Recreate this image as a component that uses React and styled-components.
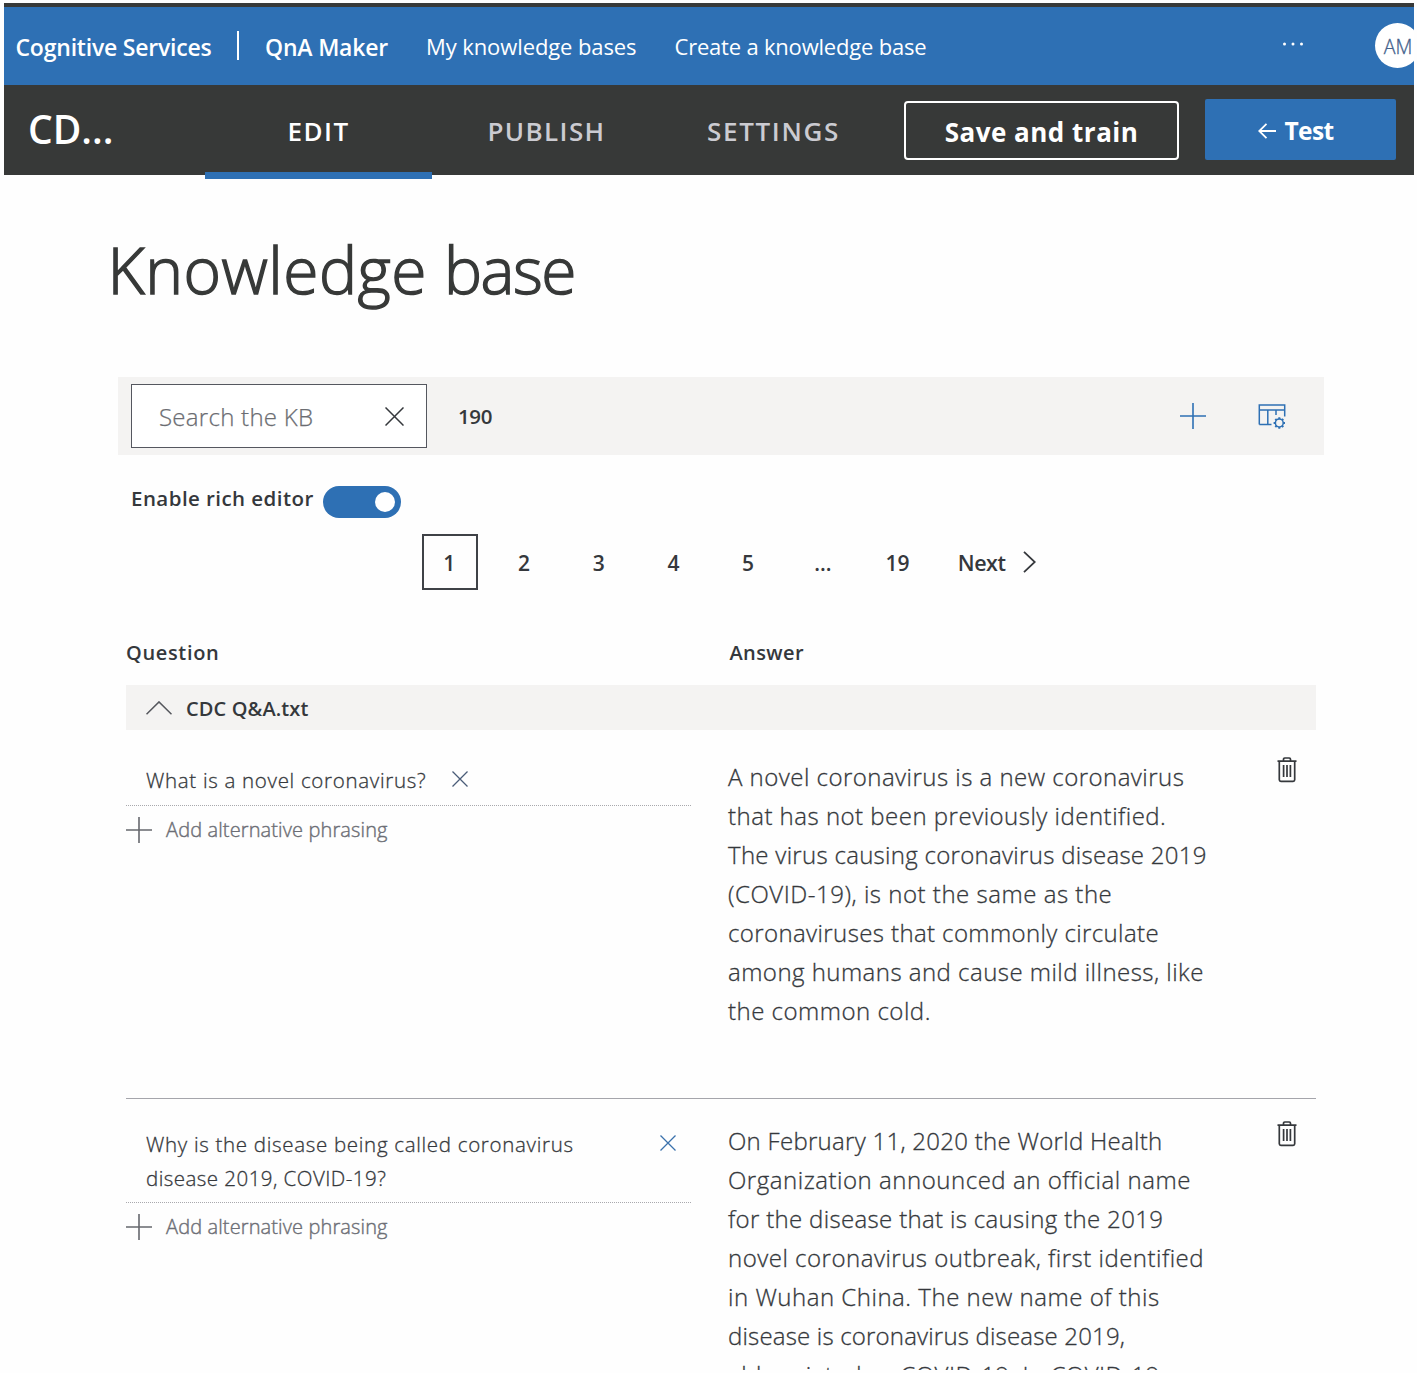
import React from 'react';
import styled, { createGlobalStyle } from 'styled-components';

const blue = '#2e70b4';
const dark = '#373938';
const ink = '#35383c';
const panel = '#f4f3f2';

const GlobalStyle = createGlobalStyle`
  * { box-sizing: border-box; }
  body {
    margin: 0;
    background: #fefefe;
    color: ${ink};
    font-family: "Open Sans", "Noto Sans", sans-serif;
  }
`;

const Text = styled.span`
  display: block;
  white-space: nowrap;
  letter-spacing: ${(p) => p.$ls || 0}px;
`;

const Screen = styled.div`
  height: 1370px;
  padding: 3px 3px 0 4px;
  overflow: hidden;
`;

const Header = styled.header`
  height: 172px;
  border-top: 4px solid ${dark};
  background: ${dark};
`;

const ServiceBar = styled.nav`
  display: flex;
  align-items: center;
  height: 77.5px;
  padding-left: 11.5px;
  background: ${blue};
  color: #fff;
  overflow: hidden;
`;

const Brand = styled(Text)`
  font-size: 23px;
  font-weight: 600;
  line-height: 32px;
  padding-top: 2px;
`;

const Divider = styled.i`
  width: 2px;
  height: 29px;
  margin: 0 26px 0 25.5px;
  background: #fff;
`;

const ServiceLink = styled(Text)`
  margin-left: 38px;
  font-size: 22px;
  line-height: 32px;
  padding-top: 1px;
`;

const More = styled.svg`
  width: 22px;
  height: 6px;
  margin: 0 71.5px 3px auto;
  fill: #fff;
`;

const Avatar = styled.div`
  flex: none;
  display: grid;
  place-items: center;
  width: 45px;
  height: 45px;
  margin-right: -6px;
  padding: 1px 0 0 1px;
  border-radius: 50%;
  background: #fff;
  color: #44628c;
  font-size: 19.5px;
  font-weight: 300;
  -webkit-text-stroke: 0.3px;
`;

const KbBar = styled.div`
  display: flex;
  align-items: center;
  height: 91px;
  padding-left: 24px;
  color: #fff;
`;

const KbName = styled(Text)`
  width: 177px;
  font-size: 39px;
  font-weight: 600;
  line-height: 54px;
  padding-bottom: 3px;
`;

const Tab = styled(Text)`
  position: relative;
  width: 227px;
  height: 91px;
  padding-left: ${(p) => (p.$active ? 0 : 2)}px;
  color: ${(p) => (p.$active ? '#fff' : '#cbcbd1')};
  font-size: 26px;
  font-weight: 600;
  line-height: 92px;
  text-align: center;

  &::after {
    content: '';
    display: ${(p) => (p.$active ? 'block' : 'none')};
    position: absolute;
    left: 0;
    right: 0;
    bottom: -3px;
    height: 7px;
    background: ${blue};
  }
`;

const BarButton = styled.button`
  display: flex;
  align-items: center;
  justify-content: center;
  padding: 0;
  border: 0;
  border-radius: 2px;
  color: #fff;
  font-family: inherit;
  font-weight: 700;
`;

const SaveButton = styled(BarButton)`
  width: 275px;
  height: 59px;
  margin: 0 0 0 18px;
  padding-top: 3px;
  border: 2px solid #fff;
  border-radius: 4px;
  background: transparent;
  font-size: 26px;
`;

const TestButton = styled(BarButton)`
  gap: 8px;
  width: 191px;
  height: 61px;
  margin: 0 0 2px 26px;
  padding: 3px 9px 0 0;
  background: ${blue};
  font-size: 24.5px;
`;

const Main = styled.main`
  padding: 55px 90px 0 114px;
`;

const Title = styled.h1`
  display: flex;
  gap: 17px;
  margin: 0 0 67px -10.5px;
  color: ${dark};
  font-size: 64px;
  font-weight: 300;
  line-height: 80px;
  -webkit-text-stroke: 1.4px;
`;

const Toolbar = styled.div`
  display: flex;
  align-items: center;
  height: 78px;
  padding: 0 38px 0 13px;
  background: ${panel};
`;

const SearchBox = styled.div`
  display: flex;
  align-items: center;
  justify-content: space-between;
  width: 295.5px;
  height: 64px;
  padding: 0 21.5px 0 27px;
  border: 1.5px solid #55575f;
  background: #fff;
`;

const Placeholder = styled(Text)`
  padding-top: 1px;
  color: #6b6d72;
  font-size: 24px;
  font-weight: 300;
  -webkit-text-stroke: 0.25px;
`;

const Count = styled(Text)`
  margin: 0 auto 0 31.5px;
  font-size: 20.5px;
  font-weight: 600;
`;

const Icon = styled.svg`
  flex: none;
  display: block;
  width: ${(p) => p.$w}px;
  height: ${(p) => p.$h}px;
  fill: none;
  stroke: ${(p) => p.$color || ink};
  stroke-width: ${(p) => p.$sw || 1.5};
`;

const ToolbarActions = styled.div`
  display: flex;
  align-items: center;
  gap: 52px;
`;

const EditorToggle = styled.div`
  display: flex;
  height: 79px;
  padding: 30px 0 0 13px;
`;

const ToggleLabel = styled(Text)`
  width: 192px;
  font-size: 20.5px;
  font-weight: 600;
  line-height: 27px;
`;

const Switch = styled.div`
  display: flex;
  justify-content: flex-end;
  width: 77.5px;
  height: 32px;
  margin-top: 1px;
  padding: 6px;
  border-radius: 16px;
  background: ${blue};
`;

const Knob = styled.i`
  width: 20px;
  height: 20px;
  border-radius: 50%;
  background: #fff;
`;

const Pagination = styled.div`
  display: flex;
  align-items: center;
  gap: 19px;
  height: 56px;
  margin-left: 304px;
`;

const Page = styled(Text)`
  flex: none;
  width: 55.7px;
  height: 56px;
  padding-right: 1px;
  border: 2px solid ${(p) => (p.$active ? '#3f4247' : 'transparent')};
  font-size: 21px;
  font-weight: 600;
  line-height: 55px;
  text-align: center;
`;

const Next = styled.div`
  display: flex;
  align-items: center;
  gap: 18px;
  margin-left: 13px;
  font-size: 21.5px;
  font-weight: 600;
`;

const Table = styled.section`
  width: 1190px;
  margin: 46px 0 0 8px;
`;

const TableHead = styled.div`
  display: grid;
  grid-template-columns: 603.5px 1fr;
  height: 49px;
  font-size: 20px;
  font-weight: 600;
  line-height: 34px;
`;

const GroupRow = styled.div`
  display: flex;
  align-items: center;
  gap: 14px;
  height: 45px;
  padding-left: 20px;
  background: ${panel};
  font-size: 20px;
  font-weight: 600;

  span { padding-top: 2px; }
`;

const QnaRow = styled.div`
  display: grid;
  grid-template-columns: 566px 585px 1fr;
  height: ${(p) => p.$h}px;
  padding-top: ${(p) => p.$top}px;
  border-bottom: 1px solid #a5a5ab;
`;

const QuestionCell = styled.div`
  padding-right: 1px;
  color: ${ink};
`;

const Question = styled.div`
  display: flex;
  align-items: flex-start;
  gap: ${(p) => p.$gap}px;
  height: ${(p) => p.$h}px;
  padding: 6px 0 0 20px;
  border-bottom: 1px dotted #a9a9ad;
  font-size: 20.5px;
  font-weight: 300;
  line-height: 34px;
  -webkit-text-stroke: 0.3px;

  svg { margin-top: 8px; }
`;

const AddPhrasing = styled.div`
  display: flex;
  align-items: center;
  gap: 14px;
  height: 47px;
  color: #6c6e75;
  font-size: 20px;
  font-weight: 300;
  -webkit-text-stroke: 0.4px;
`;

const Answer = styled.div`
  padding-left: 36px;
  font-size: 24px;
  font-weight: 300;
  line-height: 39px;
  -webkit-text-stroke: 0.3px;
`;

function Cross({ size, sw, color }) {
  return (
    <Icon $w={size} $h={size} $sw={sw} $color={color} viewBox={`0 0 ${size} ${size}`}>
      <path d={`M.5 .5L${size - 0.5} ${size - 0.5}M${size - 0.5} .5L.5 ${size - 0.5}`} />
    </Icon>
  );
}

function Plus({ color }) {
  return (
    <Icon $w={26} $h={26} $color={color} $sw={1.6} viewBox="0 0 26 26">
      <path d="M13 0V26M0 13H26" />
    </Icon>
  );
}

function ColumnSettings() {
  return (
    <Icon $w={28} $h={26} $color={blue} viewBox="0 0 28 26">
      <path d="M1.3 21.5V2H26.7V13.5M1.3 7H26.7M9.8 7V21.5M18 7V12M1.3 21.5H13.5" />
      <circle cx="21.3" cy="20" r="3.9" />
      <path
        d="M21.3 14.3V16.1M21.3 23.9V25.7M15.6 20H17.4M25.2 20H27M17.3 16L18.6 17.3M24 22.7L25.3 24M17.3 24L18.6 22.7M24 17.3L25.3 16"
        strokeWidth="2"
      />
    </Icon>
  );
}

function Trash() {
  return (
    <Icon $w={20} $h={26} $sw={1.7} viewBox="0 0 20 26">
      <path d="M.5 4.2H19.5M6.5 4V2.3Q6.5 1 7.8 1H12.2Q13.5 1 13.5 2.3V4M2.3 4.2V22.7Q2.3 24.3 3.9 24.3H16.1Q17.7 24.3 17.7 22.7V4.2M6.6 8V20M10 8V20M13.4 8V20" />
    </Icon>
  );
}

const rows = [
  {
    h: 368.5,
    top: 27,
    gap: 26,
    questionHeight: 49,
    cross: '#4a5c78',
    question: [['What is a novel coronavirus?', 0.69]],
    answer: [
      ['A novel coronavirus is a new coronavirus', 0.47],
      ['that has not been previously identified.', 0.49],
      ['The virus causing coronavirus disease 2019', 0.29],
      ['(COVID-19), is not the same as the', 0.52],
      ['coronaviruses that commonly circulate', 0.39],
      ['among humans and cause mild illness, like', 0.47],
      ['the common cold.', 0.5],
    ],
  },
  {
    h: 368,
    top: 22.5,
    gap: 86,
    questionHeight: 82,
    cross: '#3a71ac',
    question: [
      ['Why is the disease being called coronavirus', 0.69],
      ['disease 2019, COVID-19?', 0.46],
    ],
    answer: [
      ['On February 11, 2020 the World Health', 0.28],
      ['Organization announced an official name', 0.53],
      ['for the disease that is causing the 2019', 0.33],
      ['novel coronavirus outbreak, first identified', 0.5],
      ['in Wuhan China. The new name of this', 0.52],
      ['disease is coronavirus disease 2019,', 0.18],
      ['abbreviated as COVID-19. In COVID-19,', 0.5],
    ],
  },
];

export default function App() {
  return (
    <Screen>
      <GlobalStyle />
      <Header>
        <ServiceBar>
          <Brand $ls={-0.21}>Cognitive Services</Brand>
          <Divider />
          <Brand $ls={-0.2}>QnA Maker</Brand>
          <ServiceLink $ls={-0.1}>My knowledge bases</ServiceLink>
          <ServiceLink $ls={-0.2}>Create a knowledge base</ServiceLink>
          <More viewBox="0 0 22 6">
            <circle cx="2.5" cy="3" r="1.5" />
            <circle cx="11" cy="3" r="1.5" />
            <circle cx="19.5" cy="3" r="1.5" />
          </More>
          <Avatar>AM</Avatar>
        </ServiceBar>
        <KbBar>
          <KbName $ls={0}>CD...</KbName>
          <Tab $active $ls={1.5}>EDIT</Tab>
          <Tab $ls={1.4}>PUBLISH</Tab>
          <Tab $ls={1.66}>SETTINGS</Tab>
          <SaveButton><Text $ls={0.5}>Save and train</Text></SaveButton>
          <TestButton>
            <Icon $w={18} $h={16} $color="#fff" $sw={1.8} viewBox="0 0 18 16">
              <path d="M18 8H1.2M8.5 .8L1.2 8L8.5 15.2" />
            </Icon>
            <Text $ls={-0.6}>Test</Text>
          </TestButton>
        </KbBar>
      </Header>
      <Main>
        <Title>
          <Text $ls={0.5}>Knowledge</Text>
          <Text $ls={-1.5}>base</Text>
        </Title>
        <Toolbar>
          <SearchBox>
            <Placeholder $ls={0.28}>Search the KB</Placeholder>
            <Cross size={19} sw={1.5} />
          </SearchBox>
          <Count $ls={-0.4}>190</Count>
          <ToolbarActions>
            <Plus color={blue} />
            <ColumnSettings />
          </ToolbarActions>
        </Toolbar>
        <EditorToggle>
          <ToggleLabel $ls={0.44}>Enable rich editor</ToggleLabel>
          <Switch><Knob /></Switch>
        </EditorToggle>
        <Pagination>
          {['1', '2', '3', '4', '5', '...', '19'].map((label, i) => (
            <Page key={label} $active={i === 0}>{label}</Page>
          ))}
          <Next>
            <Text $ls={-0.5}>Next</Text>
            <Icon $w={13} $h={22} $sw={1.8} viewBox="0 0 13 22">
              <path d="M1 .8L11.8 11L1 21.2" />
            </Icon>
          </Next>
        </Pagination>
        <Table>
          <TableHead>
            <Text $ls={0.66}>Question</Text>
            <Text $ls={0.4}>Answer</Text>
          </TableHead>
          <GroupRow>
            <Icon $w={26} $h={14} $color="#55575d" viewBox="0 0 26 14">
              <path d="M.5 13.3L13 .9L25.5 13.3" />
            </Icon>
            <Text $ls={0.11}>CDC Q&amp;A.txt</Text>
          </GroupRow>
          {rows.map((row) => (
            <QnaRow key={row.question[0][0]} $h={row.h} $top={row.top}>
              <QuestionCell>
                <Question $gap={row.gap} $h={row.questionHeight}>
                  <div>
                    {row.question.map(([line, ls]) => <Text key={line} $ls={ls}>{line}</Text>)}
                  </div>
                  <Cross size={16} sw={1.3} color={row.cross} />
                </Question>
                <AddPhrasing>
                  <Plus color="#66686e" />
                  <Text $ls={0.12}>Add alternative phrasing</Text>
                </AddPhrasing>
              </QuestionCell>
              <Answer>
                {row.answer.map(([line, ls]) => <Text key={line} $ls={ls}>{line}</Text>)}
              </Answer>
              <div><Trash /></div>
            </QnaRow>
          ))}
        </Table>
      </Main>
    </Screen>
  );
}
